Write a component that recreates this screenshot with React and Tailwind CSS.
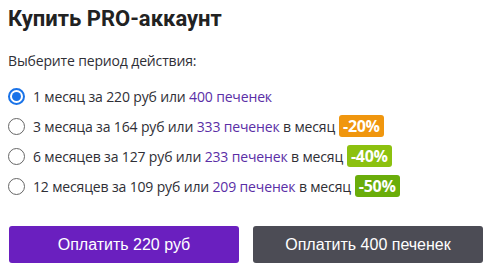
import { useState } from 'react';

const plans = [
  { id: 1, months: '1 месяц', price: 220, cookies: 400, perMonth: false, badge: null },
  { id: 3, months: '3 месяца', price: 164, cookies: 333, perMonth: true, badge: { text: '-20%', cls: 'bg-[#f0960e]' } },
  { id: 6, months: '6 месяцев', price: 127, cookies: 233, perMonth: true, badge: { text: '-40%', cls: 'bg-[#8cc10f]' } },
  { id: 12, months: '12 месяцев', price: 109, cookies: 209, perMonth: true, badge: { text: '-50%', cls: 'bg-[#6aad0a]' } },
];

function Radio({ checked }) {
  if (checked) {
    return (
      <span className="w-[17px] h-[17px] rounded-full border-2 border-[#1a73e8] flex items-center justify-center shrink-0">
        <span className="w-[9px] h-[9px] rounded-full bg-[#1a73e8]"></span>
      </span>
    );
  }
  return <span className="w-[17px] h-[17px] rounded-full border border-[#666] bg-white shrink-0"></span>;
}

export default function App() {
  const [selected, setSelected] = useState(1);

  return (
    <div className="w-[491px] h-[273px] bg-white px-[8px] pt-[5px] font-['Open_Sans',sans-serif] text-[#2f2f36]">
      <h2 className="font-['Roboto',sans-serif] text-[22px] font-bold text-[#222] leading-[28px]">
        Купить PRO-аккаунт
      </h2>

      <p className="mt-[18px] text-[14px] leading-[20px] tracking-[-0.15px]">Выберите период действия:</p>

      <div className="mt-[10px] flex flex-col">
        {plans.map((plan) => (
          <label
            key={plan.id}
            onClick={() => setSelected(plan.id)}
            className="flex items-center h-[30px] text-[14px] tracking-[-0.15px] cursor-pointer"
          >
            <Radio checked={selected === plan.id} />
            <span className="ml-[8px]">
              {plan.months} за {plan.price} руб или{' '}
              <span className="text-[#5a2ea6]">{plan.cookies} печенек</span>
              {plan.perMonth && ' в месяц'}
            </span>
            {plan.badge && (
              <span className={`ml-[4px] px-[4px] h-[22px] leading-[22px] rounded-[3px] text-white font-bold text-[16px] tracking-[-0.3px] ${plan.badge.cls}`}>
                {plan.badge.text}
              </span>
            )}
          </label>
        ))}
      </div>

      <div className="mt-[25px] flex gap-[14px] pl-[1px] font-['Liberation_Sans',sans-serif]">
        <button className="w-[230px] h-[37px] rounded-[3px] bg-[#6a1fbf] text-white text-[16px]">
          Оплатить 220 руб
        </button>
        <button className="w-[230px] h-[37px] rounded-[3px] bg-[#4c4c55] text-white text-[16px]">
          Оплатить 400 печенек
        </button>
      </div>
    </div>
  );
}
